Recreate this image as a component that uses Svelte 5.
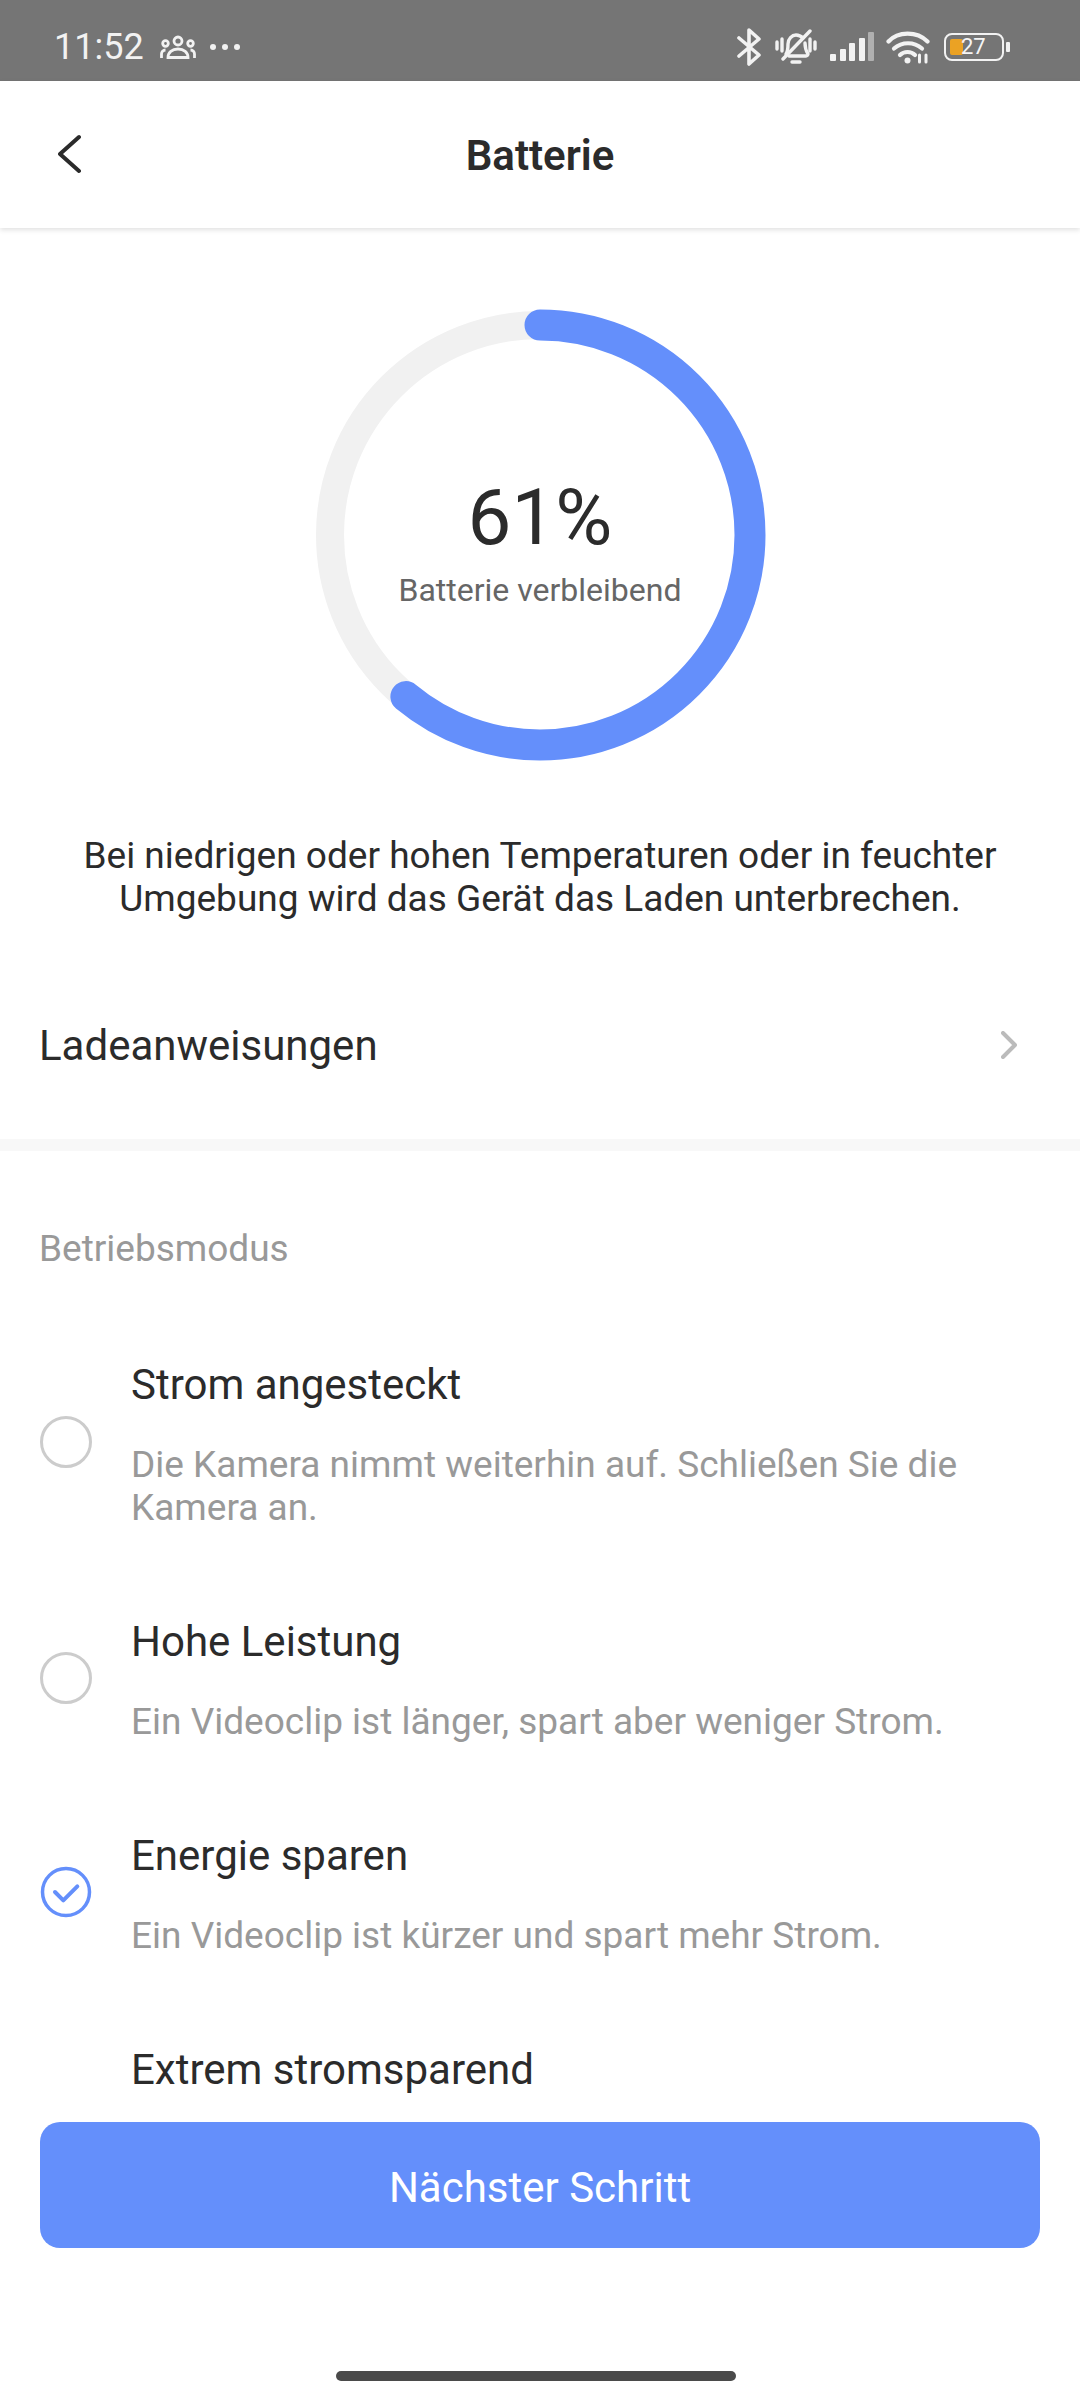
<script>
	const modes = [
		{ title: 'Strom angesteckt', desc: 'Die Kamera nimmt weiterhin auf. Schließen Sie die Kamera an.', checked: false },
		{ title: 'Hohe Leistung', desc: 'Ein Videoclip ist länger, spart aber weniger Strom.', checked: false },
		{ title: 'Energie sparen', desc: 'Ein Videoclip ist kürzer und spart mehr Strom.', checked: true },
		{ title: 'Extrem stromsparend', desc: '', checked: false }
	];

	const percent = 61;
	const radius = 210;
	const circumference = 2 * Math.PI * radius;
	const dash = (percent / 100) * circumference;
</script>

<div class="screen">
	<div class="status-bar">
		<div class="status-left">
			<span class="time">11:52</span>
			<svg class="people" width="36" height="24" viewBox="0 0 36 24" fill="none" stroke="#f2f2f2" stroke-width="2.800">
				<circle cx="18" cy="6" r="4" />
				<circle cx="5.5" cy="8.5" r="2.8" />
				<circle cx="30.5" cy="8.5" r="2.8" />
				<path d="M8 22.500c0-5 4-8.500 10-8.500s10 3.500 10 8.500z" />
				<path d="M1.500 23v-4c0-2 1.500-4 4-4" />
				<path d="M34.500 23v-4c0-2-1.500-4-4-4" />
			</svg>
			<svg class="dots" width="32" height="8" viewBox="0 0 32 8" fill="#f2f2f2">
				<circle cx="4" cy="4" r="3" />
				<circle cx="16" cy="4" r="3" />
				<circle cx="28" cy="4" r="3" />
			</svg>
		</div>
		<div class="status-right">
			<svg width="24" height="38" viewBox="0 0 24 38" fill="none" stroke="#f2f2f2" stroke-width="3.600" stroke-linecap="round" stroke-linejoin="round">
				<path d="M2 10l20 17-10 9V2l10 9L2 28" />
			</svg>
			<svg class="bell" width="42" height="36" viewBox="0 0 42 36" fill="none" stroke="#f2f2f2" stroke-width="3.400" stroke-linecap="round" stroke-linejoin="round">
				<path d="M11 25c2-3 2-6 2-10 0-5 4-9 8-9 3 0 5 1 7 3" />
				<path d="M30 14c0 5 1 8 3 11 0 1-1 2-2 2H14" />
				<path d="M17 33h8" />
				<path d="M8 30L35 2" />
				<path d="M2 13v7M7 10v12M35 10v12M40 13v7" />
			</svg>
			<svg class="signal" width="44" height="30" viewBox="0 0 44 30" fill="#f2f2f2">
				<rect x="0" y="22" width="6" height="7" rx="1" />
				<rect x="10" y="17" width="6" height="12" rx="1" />
				<rect x="19" y="11" width="6" height="18" rx="1" />
				<rect x="29" y="6" width="6" height="23" rx="1" />
				<rect x="38" y="0" width="6" height="29" rx="1" fill="#b0b0b0" />
			</svg>
			<svg class="wifi" width="44" height="34" viewBox="0 0 44 34" fill="none" stroke="#f2f2f2" stroke-width="4.200" stroke-linecap="round">
				<path d="M2.500 11.500C12 1 31 1 41.500 11.500" />
				<path d="M8 18.500c8-7 20-7 28 0" />
				<path d="M14 25c4-4 11-4 15 0" />
				<circle cx="21.500" cy="30.500" r="3" fill="#f2f2f2" stroke="none" />
				<path d="M33.500 25v7M40 25v7" stroke-width="3" />
			</svg>
			<div class="battery">
				<div class="battery-body">
					<span class="battery-fill"></span>
					<span class="battery-text">27</span>
				</div>
				<span class="battery-tip"></span>
			</div>
		</div>
	</div>

	<header class="header">
		<svg class="back" width="24" height="40" viewBox="0 0 24 40" fill="none" stroke="#2b2b2b" stroke-width="4" stroke-linecap="round" stroke-linejoin="round">
			<path d="M21 3L2 20l19 17" />
		</svg>
		<h1>Batterie</h1>
	</header>

	<main class="content">
		<section class="ring-section">
			<div class="ring">
				<svg width="460" height="460" viewBox="0 0 460 460" fill="none">
					<circle cx="230" cy="230" r={radius} stroke="#f1f1f1" stroke-width="28" />
					<circle
						cx="230"
						cy="230"
						r={radius}
						stroke="#648ffb"
						stroke-width="31"
						stroke-linecap="round"
						stroke-dasharray="{dash} {circumference}"
						transform="rotate(-90 230 230)"
					/>
				</svg>
				<div class="ring-label">
					<div class="percent">{percent}%</div>
					<div class="remaining">Batterie verbleibend</div>
				</div>
			</div>
			<p class="notice">Bei niedrigen oder hohen Temperaturen oder in feuchter<br />Umgebung wird das Gerät das Laden unterbrechen.</p>
		</section>

		<div class="link-row">
			<span>Ladeanweisungen</span>
			<svg width="16" height="28" viewBox="0 0 16 28" fill="none" stroke="#bbbbbb" stroke-width="4" stroke-linecap="round" stroke-linejoin="round">
				<path d="M2 2l12 12L2 26" />
			</svg>
		</div>

		<div class="divider"></div>

		<div class="modes">
			<div class="modes-label">Betriebsmodus</div>
			{#each modes as mode}
				<div class="mode">
					{#if mode.checked}
						<svg class="radio" width="52" height="52" viewBox="0 0 52 52" fill="none" stroke="#648ffb" stroke-width="3.500">
							<circle cx="26" cy="26" r="23.500" />
							<path d="M15 26l8.300 8.300 14-14" stroke-width="4" stroke-linecap="round" stroke-linejoin="round" />
						</svg>
					{:else if mode.desc}
						<span class="radio empty"></span>
					{:else}
						<!-- last row runs under the button, its radio is out of view -->
						<span class="radio hidden"></span>
					{/if}
					<div class="mode-text">
						<div class="mode-title">{mode.title}</div>
						{#if mode.desc}
							<div class="mode-desc">{mode.desc}</div>
						{/if}
					</div>
				</div>
			{/each}
		</div>
	</main>

	<footer class="footer">
		<button class="next">Nächster Schritt</button>
		<div class="home-bar"></div>
	</footer>
</div>

<style>
	:global(body) {
		margin: 0;
		background: #fff;
	}

	.screen {
		width: 1080px;
		height: 2400px;
		display: flex;
		flex-direction: column;
		font-family: Roboto, sans-serif;
		color: #2b2b2b;
		background: #fff;
		overflow: hidden;
	}

	.status-bar {
		height: 81px;
		flex-shrink: 0;
		background: #757575;
		display: flex;
		align-items: center;
		justify-content: space-between;
		padding: 13px 70px 0 54px;
		box-sizing: border-box;
		color: #f2f2f2;
	}

	.status-left {
		display: flex;
		align-items: center;
	}

	.time {
		font-size: 36px;
		line-height: 40px;
		width: 106px;
	}

	.dots {
		margin-left: 13px;
	}

	.status-right {
		display: flex;
		align-items: center;
		gap: 14px;
	}

	.bell {
		margin-right: -1px;
	}

	.signal {
		margin-right: -2px;
	}

	.battery {
		display: flex;
		align-items: center;
		gap: 2px;
	}

	.battery-body {
		width: 60px;
		height: 28px;
		border: 2.500px solid #f2f2f2;
		border-radius: 8px;
		box-sizing: border-box;
		position: relative;
		display: flex;
		align-items: center;
		padding-left: 15px;
	}

	.battery-fill {
		position: absolute;
		left: 4px;
		top: 4px;
		bottom: 4px;
		width: 13px;
		background: #eba224;
		border-radius: 2px;
	}

	.battery-text {
		position: relative;
		font-size: 22px;
		line-height: 24px;
		color: #f5f5f5;
	}

	.battery-tip {
		width: 4px;
		height: 10px;
		background: #f2f2f2;
		border-radius: 1px;
	}

	.header {
		height: 147px;
		flex-shrink: 0;
		position: relative;
		display: flex;
		align-items: center;
		justify-content: center;
		background: #fff;
		box-shadow: 0 2px 5px rgba(0, 0, 0, 0.12);
		z-index: 1;
	}

	.header h1 {
		margin: 3px 0 0;
		font-size: 42px;
		font-weight: 600;
		line-height: 48px;
	}

	.back {
		position: absolute;
		left: 58px;
		top: 53px;
	}

	.content {
		flex: 1;
		min-height: 0;
		overflow: hidden;
	}

	.ring-section {
		display: flex;
		flex-direction: column;
		align-items: center;
		padding-top: 77px;
	}

	.ring {
		width: 460px;
		height: 460px;
		position: relative;
	}

	.ring-label {
		position: absolute;
		inset: 0;
		display: flex;
		flex-direction: column;
		align-items: center;
		padding-top: 167px;
		box-sizing: border-box;
	}

	.percent {
		font-size: 78px;
		line-height: 92px;
	}

	.remaining {
		font-size: 32px;
		line-height: 40px;
		color: #666;
		margin-top: 6px;
	}

	.notice {
		margin: 69px 0 0;
		font-size: 37px;
		line-height: 43px;
		text-align: center;
	}

	.link-row {
		display: flex;
		align-items: center;
		justify-content: space-between;
		padding: 0 63px 0 39px;
		margin-top: 70px;
		height: 110px;
		font-size: 42px;
	}

	.divider {
		height: 12px;
		margin-top: 39px;
		background: #f8f8f8;
	}

	.modes {
		padding: 0 39px;
	}

	.modes-label {
		font-size: 37px;
		line-height: 40px;
		color: #999;
		margin: 78px 0 92px;
	}

	.mode {
		display: flex;
		align-items: center;
		gap: 39px;
		margin-bottom: 89px;
	}

	.radio {
		flex-shrink: 0;
		width: 52px;
		height: 52px;
		margin: 0 0 6px 1px;
	}

	.radio.empty {
		box-sizing: border-box;
		border: 3.500px solid #cccccc;
		border-radius: 50%;
	}

	.radio.hidden {
		height: 0;
		margin-bottom: 0;
	}

	.mode-text {
		min-width: 0;
	}

	.mode-title {
		font-size: 42px;
		line-height: 48px;
	}

	.mode-desc {
		font-size: 37px;
		line-height: 43px;
		color: #999;
		margin-top: 34px;
	}

	.footer {
		flex-shrink: 0;
		background: #fff;
		padding: 22px 40px 0;
		height: 300px;
		box-sizing: border-box;
		display: flex;
		flex-direction: column;
		align-items: center;
	}

	.next {
		width: 100%;
		height: 126px;
		border: none;
		border-radius: 20px;
		background: #648ffb;
		color: #fff;
		font-family: inherit;
		font-size: 42px;
		padding: 5px 0 0;
	}

	.home-bar {
		width: 400px;
		height: 10px;
		border-radius: 5px;
		background: #4a4a4a;
		margin: 123px 8px 0 0;
	}
</style>
